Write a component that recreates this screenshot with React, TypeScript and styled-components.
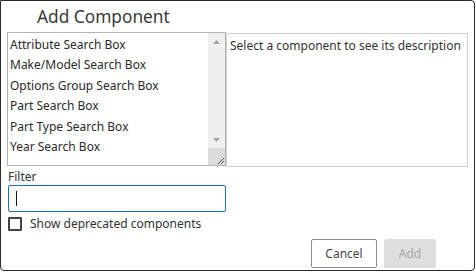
import React from "react";
import styled, { createGlobalStyle } from "styled-components";

const GlobalStyle = createGlobalStyle`
  html, body {
    margin: 0;
    padding: 0;
    background: #ffffff;
  }
  body {
    font-family: "Noto Sans", "Open Sans", "Liberation Sans", sans-serif;
  }
`;

const Dialog = styled.div`
  box-sizing: border-box;
  width: 475px;
  height: 271px;
  border: 1px solid #2b2b2b;
  border-radius: 0 4px 4px 4px;
  background: #fff;
  display: flex;
  flex-direction: column;
  padding: 0 0 0 6px;
  color: #333;
`;

const Title = styled.div`
  height: 31px;
  padding-left: 30px;
  font-size: 17.3px;
  line-height: 31px;
  color: #3a3a3a;
`;

const Panes = styled.div`
  display: flex;
  align-items: flex-start;
`;

const ListBox = styled.div`
  box-sizing: border-box;
  width: 219px;
  height: 134px;
  border: 1px solid #b5b5b5;
  display: flex;
`;

const Items = styled.ul`
  flex: 1;
  list-style: none;
  margin: 0;
  padding: 2px 0 0 2px;
  overflow: hidden;
`;

const Item = styled.li`
  font-size: 12px;
  line-height: 20.4px;
  color: #2a2a2a;
  white-space: nowrap;
`;

const ScrollBar = styled.div`
  width: 17px;
  background: #f0f0f0;
  display: flex;
  flex-direction: column;
  align-items: center;
`;

const Arrow = styled.div`
  height: 17px;
  width: 17px;
  display: flex;
  align-items: center;
  justify-content: center;
`;

const Track = styled.div`
  flex: 1;
`;

const Grip = styled.div`
  width: 17px;
  height: 17px;
  background: #dcdcdc;
  display: flex;
  align-items: flex-end;
  justify-content: flex-end;
`;

const Description = styled.div`
  box-sizing: border-box;
  width: 242px;
  height: 134px;
  margin-top: 1px;
  border: 1px solid #d0d0d0;
  padding: 3px 0 0 3px;
  font-size: 12px;
  line-height: 18px;
  color: #333;
  white-space: nowrap;
`;

const FieldLabel = styled.div`
  margin-top: 2px;
  padding-left: 1px;
  font-size: 12px;
  line-height: 16px;
  color: #333;
`;

const TextInput = styled.div`
  box-sizing: border-box;
  width: 218px;
  height: 27px;
  margin-left: 1px;
  border: 1px solid #1a6fbf;
  border-radius: 2px;
  display: flex;
  align-items: center;
  padding-left: 7px;
`;

const Caret = styled.span`
  width: 1px;
  height: 15px;
  background: #111;
`;

const CheckRow = styled.label`
  display: flex;
  align-items: center;
  gap: 8px;
  height: 14px;
  margin: 5px 0 0 1px;
  font-size: 12px;
  line-height: 14px;
  color: #333;
`;

const Box = styled.span`
  box-sizing: border-box;
  width: 14px;
  height: 14px;
  border: 2px solid #444;
  border-radius: 1px;
`;

const Footer = styled.div`
  display: flex;
  justify-content: flex-end;
  gap: 7px;
  margin-top: auto;
  padding: 0 38px 2px 0;
`;

const Button = styled.button<{ $disabled?: boolean; $width: number }>`
  box-sizing: border-box;
  width: ${(p) => p.$width}px;
  height: 29px;
  padding: 0;
  border-radius: 2px;
  font-family: inherit;
  font-size: 12px;
  color: ${(p) => (p.$disabled ? "#a8a8a8" : "#444")};
  background: ${(p) => (p.$disabled ? "#dedede" : "#fff")};
  border: 1px solid ${(p) => (p.$disabled ? "#dedede" : "#8a8a8a")};
`;

const components = [
  "Attribute Search Box",
  "Make/Model Search Box",
  "Options Group Search Box",
  "Part Search Box",
  "Part Type Search Box",
  "Year Search Box",
];

export default function App() {
  return (
    <>
      <GlobalStyle />
      <Dialog>
        <Title>Add Component</Title>
        <Panes>
          <ListBox>
            <Items>
              {components.map((c) => (
                <Item key={c}>{c}</Item>
              ))}
            </Items>
            <ScrollBar>
              <Arrow>
                <svg width="7" height="4" viewBox="0 0 7 4">
                  <path d="M0 4 L3.5 0 L7 4 Z" fill="#a3a3a3" />
                </svg>
              </Arrow>
              <Track />
              <Arrow>
                <svg width="7" height="4" viewBox="0 0 7 4">
                  <path d="M0 0 L3.5 4 L7 0 Z" fill="#a3a3a3" />
                </svg>
              </Arrow>
              <Grip>
                <svg width="10" height="10" viewBox="0 0 10 10">
                  <path d="M9 3 L3 9 M9 6 L6 9" stroke="#555" strokeWidth="1" />
                </svg>
              </Grip>
            </ScrollBar>
          </ListBox>
          <Description>Select a component to see its description</Description>
        </Panes>
        <FieldLabel>Filter</FieldLabel>
        <TextInput>
          <Caret />
        </TextInput>
        <CheckRow>
          <Box />
          Show deprecated components
        </CheckRow>
        <Footer>
          <Button $width={66}>Cancel</Button>
          <Button $width={52} $disabled>
            Add
          </Button>
        </Footer>
      </Dialog>
    </>
  );
}
